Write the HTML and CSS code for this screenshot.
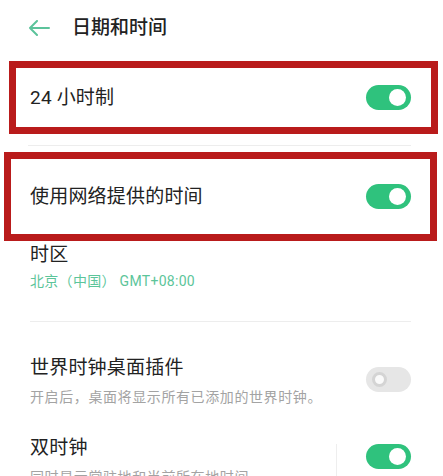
FILE: index.html
```html
<!DOCTYPE html>
<html lang="zh-CN">
  <head>
    <meta charset="UTF-8" />
    <meta name="viewport" content="width=device-width, initial-scale=1.0" />
    <title>日期和时间</title>
    <link rel="stylesheet" href="styles.css">
  </head>
  <body>
    <div class="header">
      <svg class="back" width="22" height="16" viewBox="0 0 22 16">
        <path d="M21 8H2M9 1L2 8l7 7" fill="none" stroke="#5cc39b" stroke-width="2" stroke-linecap="round" stroke-linejoin="round" />
      </svg>
      <h1>日期和时间</h1>
    </div>

    <div class="mark mark-one">
      <div class="row">
        <span class="label">24 小时制</span>
        <span class="switch on"></span>
      </div>
    </div>

    <div class="divider"></div>

    <div class="mark mark-two">
      <div class="row">
        <span class="label">使用网络提供的时间</span>
        <span class="switch on"></span>
      </div>
    </div>

    <div class="item zone">
      <div class="label">时区</div>
      <div class="sub green">北京（中国） GMT+08:00</div>
    </div>

    <div class="divider wide"></div>

    <div class="item world">
      <div class="text">
        <div class="label">世界时钟桌面插件</div>
        <div class="sub">开启后，桌面将显示所有已添加的世界时钟。</div>
      </div>
      <span class="switch off"></span>
    </div>

    <div class="item dual">
      <div class="text">
        <div class="label">双时钟</div>
        <div class="sub">同时显示常驻地和当前所在地时间</div>
      </div>
      <span class="vline"></span>
      <span class="switch on"></span>
    </div>
  </body>
</html>
```

FILE: styles.css
```css
body {
  margin: 0;
  background: #fff;
  font-family: Roboto, "Noto Sans CJK SC", sans-serif;
  color: #222;
  overflow: hidden;
  height: 476px;
}

.header {
  display: flex;
  align-items: center;
  height: 56px;
  padding-left: 28px;
}

.back {
  margin-right: 22px;
}

h1 {
  margin: 0;
  font-size: 19px;
  font-weight: 500;
  line-height: 24px;
}

/* red outline boxes */
.mark {
  border: 7px solid #b91b1b;
}

.mark-one {
  margin: 5px 5px 0 9px;
}

.mark-one .row {
  height: 59px;
  padding: 0 20px 0 14px;
}

.mark-two {
  margin: 6px 6px 0 4px;
}

.mark-two .row {
  height: 75px;
  padding: 0 19px 0 19px;
}

.row {
  display: flex;
  align-items: center;
  justify-content: space-between;
}

.label {
  font-size: 19px;
  line-height: 24px;
  letter-spacing: 0.2px;
}

.sub {
  font-size: 14px;
  line-height: 20px;
  color: #a3a3a3;
  margin-top: 7px;
  letter-spacing: 0.6px;
}

.green {
  color: #5cc59a;
  margin-top: 4px;
  letter-spacing: 0.3px;
}

.divider {
  height: 1px;
  background: #ededed;
  margin: 11px 32px 0 28px;
}

.divider.wide {
  margin: 30px 32px 0 30px;
}

.item {
  padding-left: 30px;
}

.zone {
  padding-top: 2px;
}

.world,
.dual {
  display: flex;
  align-items: center;
  padding-right: 32px;
}

.world {
  padding-top: 34px;
}

.dual {
  padding-top: 29px;
  align-items: flex-start;
}

.text {
  flex: 1;
}

.vline {
  width: 1px;
  height: 34px;
  background: #eee;
  margin: 8px 29px 0 0;
}

/* toggle switches */
.switch {
  position: relative;
  width: 45px;
  height: 25px;
  border-radius: 13px;
  flex-shrink: 0;
}

.switch.on {
  background: #2fc27d;
}

.switch.on::after {
  content: "";
  position: absolute;
  top: 4px;
  right: 5px;
  width: 17px;
  height: 17px;
  border-radius: 50%;
  background: #fff;
}

.switch.off {
  background: #e6e6e6;
  margin-top: -4px;
}

.switch.off::after {
  content: "";
  position: absolute;
  top: 5px;
  left: 6px;
  width: 9px;
  height: 9px;
  border-radius: 50%;
  background: #fafafa;
  border: 3px solid #d4d4d4;
}

.dual .switch {
  margin-top: 8px;
}
```
